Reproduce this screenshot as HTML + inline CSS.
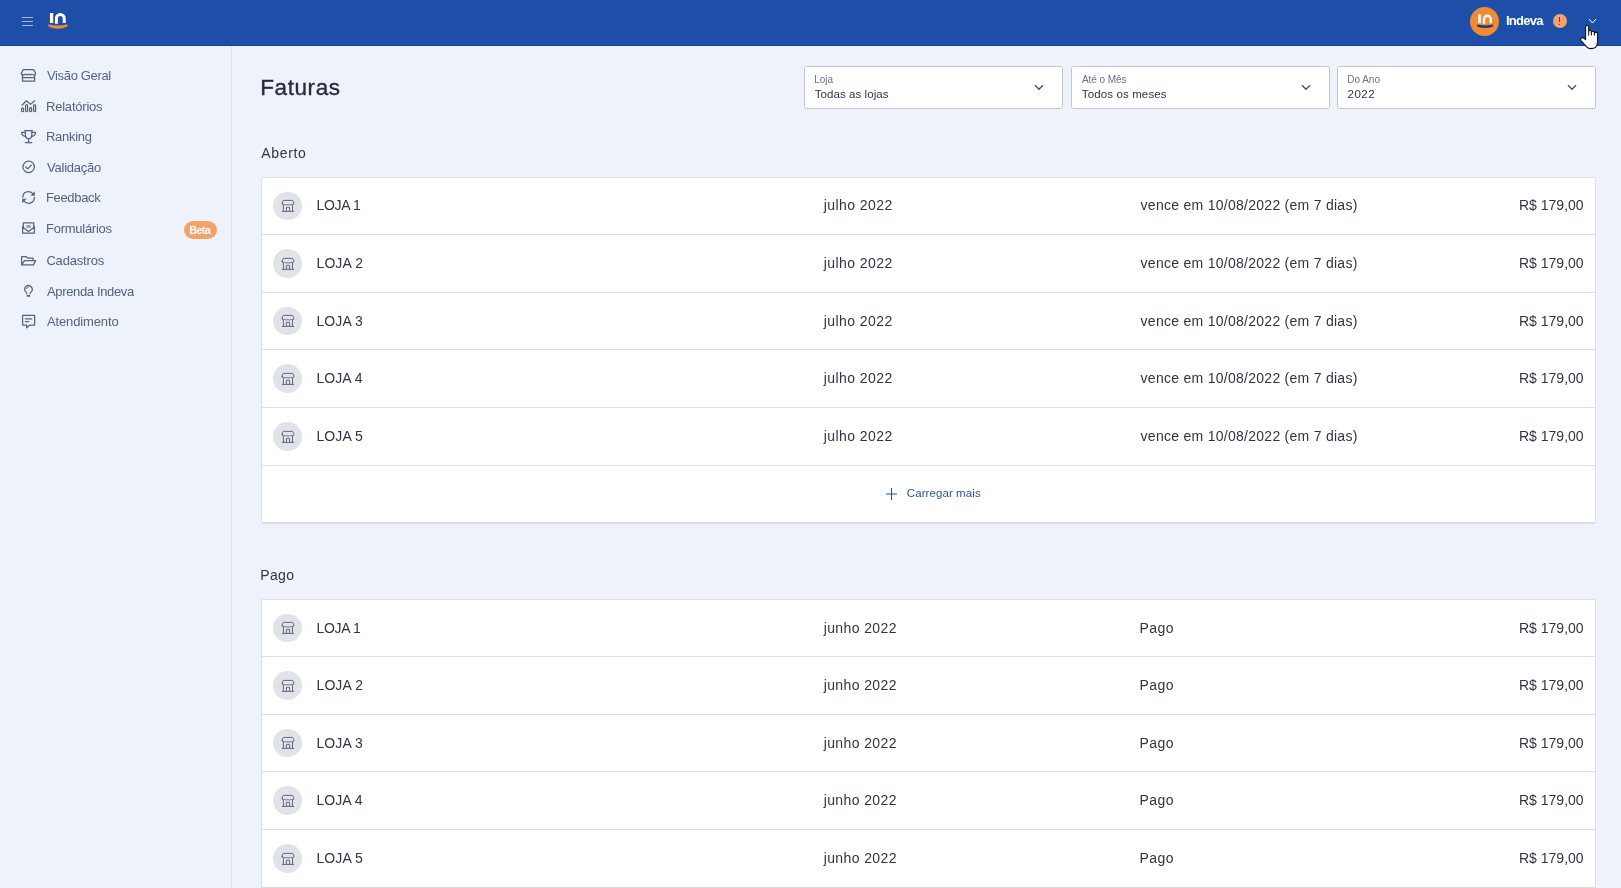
<!DOCTYPE html>
<html><head><meta charset="utf-8"><title>Faturas</title>
<style>
html,body{margin:0;padding:0;}
body{width:1621px;height:888px;overflow:hidden;position:relative;background:#eef2fa;font-family:"Liberation Sans", sans-serif;}
#root{position:absolute;left:0;top:0;width:1621px;height:888px;will-change:transform;overflow:hidden}
.t{position:absolute;line-height:1;white-space:nowrap;}
#hdr{position:absolute;left:0;top:0;width:1621px;height:45px;background:#1d4fa8;box-shadow:0 1px 0 #0f409a;z-index:5}
.hb{position:absolute;left:21.9px;width:11.2px;height:1.3px;background:#acb5c6}
#side{position:absolute;left:231px;top:45px;width:1px;height:843px;background:#dfe3ea}
.dd{position:absolute;top:66px;height:43px;border:1px solid #c4c6cc;border-radius:2.5px;background:#fff;box-sizing:border-box}
.card{position:absolute;left:261px;width:1335px;background:#fff;border:1px solid #dfe0e5;border-bottom:2px solid #dcdde2;box-sizing:border-box;border-radius:2px}
.sep{position:absolute;left:262px;width:1333px;height:1px;background:#dfe0e5}
.av{position:absolute;left:273.2px;width:28.6px;height:28.6px;border-radius:50%;background:#e1e3e8}
</style></head><body><div id="root">

<div id="hdr">
  <div class="hb" style="top:16.6px"></div><div class="hb" style="top:20.6px"></div><div class="hb" style="top:24.6px"></div>
  <svg style="position:absolute;left:44px;top:8px" width="28" height="24" viewBox="0 0 28 24">
    <rect x="5.95" y="5" width="3.25" height="10" fill="#fff"/>
    <path d="M12.4 15.8 V10.4 A3.9 3.9 0 0 1 20.25 10.4 V15" stroke="#fff" stroke-width="3" fill="none"/>
    <path d="M4.3 16.2 Q14 19 23.5 16.2 L23.3 18.6 Q14 23 4.5 18.6 Z" fill="#f5892c"/>
  </svg>
  <div style="position:absolute;left:1470px;top:6.9px;width:29px;height:29px;border-radius:50%;background:#f28a35"></div>
  <svg style="position:absolute;left:1468px;top:5px" width="34" height="34" viewBox="0 0 34 34">
    <rect x="10.2" y="9.2" width="2.6" height="9" fill="#fff"/>
    <path d="M15.95 18.8 V14.2 A3.4 3.4 0 0 1 22.75 14.2 V18.2" stroke="#fff" stroke-width="2.4" fill="none"/>
    <path d="M9 19.6 Q17.2 21.2 25.3 19.6 L25.1 21.4 Q17.2 24.6 9.2 21.4 Z" fill="#1d3c70"/>
  </svg>
<div class="t" style="left:1505.90px;top:14.00px;font-size:13px;color:#fff;font-weight:700;letter-spacing:-0.711px;">Indeva</div>
  <div style="position:absolute;left:1553px;top:14px;width:14px;height:14px;border-radius:50%;background:#f2a26e"></div>
  <div style="position:absolute;left:1559.3px;top:16.8px;width:1.1px;height:5.4px;background:#5a4536"></div>
  <div style="position:absolute;left:1559.3px;top:23.6px;width:1.1px;height:1.3px;background:#5a4536"></div>
  <svg style="position:absolute;left:1588px;top:18px" width="9" height="7" viewBox="0 0 9 7"><path d="M1 1 L4.5 5 L8 1" stroke="#fff" stroke-width="1" fill="none"/></svg>
</div>
<div id="side"></div>

<svg style="position:absolute;left:0;top:45px;overflow:visible" width="231" height="300" viewBox="0 45 231 300">
 <g fill="none" stroke="#55637d" stroke-width="1.25" stroke-linejoin="round" stroke-linecap="round">
  <!-- store -->
  <path d="M23.3 69.6 H33.6 L35.6 73.3 Q35.6 74.9 34.2 74.9 Q32.4 75.1 31.6 74.2 Q30.6 75.3 28.5 74.2 Q26.6 75.3 25.4 74.2 Q24.6 75.1 22.8 74.9 Q21.3 74.9 21.3 73.3 Z"/>
  <path d="M22.5 75 V81.2 H34.6 V75 M22.5 77.5 H34.6"/>
  <!-- chart -->
  <path d="M22 105.2 L26.4 100.8 L30.5 104.4 L34.6 100.8"/>
  <rect x="21.6" y="108" width="2" height="3.5" rx="0.8"/>
  <rect x="25.6" y="104.8" width="2" height="6.7" rx="0.8"/>
  <rect x="29.6" y="107.6" width="2" height="3.9" rx="0.8"/>
  <rect x="33.6" y="104.8" width="2" height="6.7" rx="0.8"/>
  <!-- trophy -->
  <path d="M24.8 130.5 H32.4 M25.4 130.6 V135.5 Q25.6 138.6 28.6 138.8 Q31.6 138.6 31.8 135.5 V130.6"/>
  <path d="M25.2 132.3 H21.6 Q21.8 136 25.6 136.6 M32 132.3 H35.6 Q35.4 136 31.6 136.6"/>
  <path d="M28.6 138.8 V142.4 M25.4 142.5 H31.8"/>
  <!-- check -->
  <circle cx="28.65" cy="166.9" r="5.7"/>
  <path d="M25.8 167 L27.7 168.9 L31.4 165.1"/>
  <!-- refresh -->
  <path d="M22.7 197.2 Q23.2 191.7 28.4 191.6 Q31 191.6 33 193.8"/>
  <path d="M34.5 197.4 Q34 203.2 28.6 203.3 Q26 203.3 24.2 201.2"/>
  <!-- envelope -->
  <path d="M22.6 226.6 V233.2 H34.4 V226.6 M22.8 227.2 L28.5 231.4 L34.2 227.2"/>
  <path d="M23.3 228.5 V222.9 H33.7 V228.5"/>
  <!-- folder -->
  <path d="M33.4 264.9 H21.6 V256.6 H26.2 L27.6 258 H33 V260.3"/>
  <path d="M21.8 264.8 L24.4 260.6 H35.6 L33.4 264.9"/>
  <!-- bulb -->
  <path d="M26.8 293.8 Q26.7 292.8 25.72 291.9 A3.7 3.7 0 1 1 31.18 291.9 Q30.2 292.8 30.1 293.8"/>
  <path d="M26.6 288.6 Q27 287.5 28.2 287.4" stroke-width="0.9"/>
  <!-- chat -->
  <path d="M22.6 315.3 H34.6 V325 H29.8 L26.6 327.8 V325 H22.6 Z"/>
  <path d="M25.4 318.9 H31.6 M25.4 321.5 H28.8"/>
 </g>
 <g fill="#55637d">
  <path d="M34.9 191.2 V195.8 H30.4 Z"/>
  <path d="M22.2 198.8 H26.6 L22.2 203.3 Z"/>
  <rect x="26.3" y="225.1" width="4.6" height="2.8" fill="#9aa3b3"/>
  <rect x="26.6" y="295" width="3.6" height="1.8" rx="0.6"/>
 </g>
</svg>
<div class="t" style="left:47.00px;top:69.00px;font-size:13px;color:#55637f;font-weight:400;letter-spacing:-0.350px;">Visão Geral</div><div class="t" style="left:46.00px;top:100.00px;font-size:13px;color:#55637f;font-weight:400;letter-spacing:-0.214px;">Relatórios</div><div class="t" style="left:46.00px;top:130.00px;font-size:13px;color:#55637f;font-weight:400;letter-spacing:-0.278px;">Ranking</div><div class="t" style="left:47.00px;top:161.00px;font-size:13px;color:#55637f;font-weight:400;letter-spacing:-0.225px;">Validação</div><div class="t" style="left:46.00px;top:191.00px;font-size:13px;color:#55637f;font-weight:400;letter-spacing:-0.342px;">Feedback</div><div class="t" style="left:46.00px;top:222.00px;font-size:13px;color:#55637f;font-weight:400;letter-spacing:-0.262px;">Formulários</div><div class="t" style="left:46.40px;top:254.00px;font-size:13px;color:#55637f;font-weight:400;letter-spacing:-0.181px;">Cadastros</div><div class="t" style="left:47.00px;top:285.00px;font-size:13px;color:#55637f;font-weight:400;letter-spacing:-0.359px;">Aprenda Indeva</div><div class="t" style="left:47.00px;top:315.00px;font-size:13px;color:#55637f;font-weight:400;letter-spacing:-0.136px;">Atendimento</div><div style="position:absolute;left:183.7px;top:220.7px;width:33.5px;height:18.3px;border-radius:9.2px;background:#f3a26b"></div>
<div class="t" style="left:189.30px;top:225.00px;font-size:11px;color:#fff;font-weight:700;letter-spacing:-0.775px;">Beta</div><div class="t" style="left:260.20px;top:77.00px;font-size:22.5px;color:#262c38;font-weight:400;letter-spacing:0.595px;-webkit-text-stroke:0.35px #262c38;">Faturas</div><div class="dd" style="left:804px;width:259px"></div>
<div class="t" style="left:814.20px;top:75.00px;font-size:10px;color:#6b7385;font-weight:400;letter-spacing:-0.015px;">Loja</div><div class="t" style="left:814.80px;top:89.00px;font-size:11.5px;color:#2f3542;font-weight:400;letter-spacing:0.067px;">Todas as lojas</div><svg style="position:absolute;left:1033.5px;top:84px" width="10" height="7" viewBox="0 0 10 7"><path d="M1 1.2 L5 5.2 L9 1.2" stroke="#4a5262" stroke-width="1.4" fill="none"/></svg>
<div class="dd" style="left:1071px;width:259px"></div>
<div class="t" style="left:1082.00px;top:75.00px;font-size:10px;color:#6b7385;font-weight:400;letter-spacing:-0.065px;">Até o Mês</div><div class="t" style="left:1081.80px;top:89.00px;font-size:11.5px;color:#2f3542;font-weight:400;letter-spacing:0.127px;">Todos os meses</div><svg style="position:absolute;left:1300.5px;top:84px" width="10" height="7" viewBox="0 0 10 7"><path d="M1 1.2 L5 5.2 L9 1.2" stroke="#4a5262" stroke-width="1.4" fill="none"/></svg>
<div class="dd" style="left:1337px;width:259px"></div>
<div class="t" style="left:1347.20px;top:75.00px;font-size:10px;color:#6b7385;font-weight:400;letter-spacing:0.001px;">Do Ano</div><div class="t" style="left:1347.50px;top:89.00px;font-size:11.5px;color:#2f3542;font-weight:400;letter-spacing:0.538px;">2022</div><svg style="position:absolute;left:1566.5px;top:84px" width="10" height="7" viewBox="0 0 10 7"><path d="M1 1.2 L5 5.2 L9 1.2" stroke="#4a5262" stroke-width="1.4" fill="none"/></svg>
<div class="t" style="left:261.30px;top:146.00px;font-size:14px;color:#2f3542;font-weight:400;letter-spacing:0.648px;">Aberto</div><div class="card" style="top:177px;height:347px"></div>
<div class="sep" style="top:234px"></div>
<div class="av" style="top:191.70px"></div>
<svg style="position:absolute;left:280.00px;top:198.00px" width="16" height="16" viewBox="0 0 16 16">
<g fill="none" stroke="#596275" stroke-width="0.95" stroke-linejoin="round" stroke-linecap="round">
<path d="M2.1 5.4 Q2.1 6.8 3.4 6.8 Q4.3 6.8 4.9 6.2 Q5.6 7.2 6.4 7.2 Q7.3 7.2 7.9 6.2 Q8.6 7.2 9.5 7.2 Q10.4 7.2 11 6.2 Q11.7 6.8 12.6 6.8 Q13.9 6.8 13.9 5.4 Q13.9 3.8 12.6 2.4 H3.3 Q2.1 3.8 2.1 5.4 Z"/>
<path d="M3.4 7 V13.3 M12.5 7 V13.3 M2.3 13.4 H13.7 M6.4 13.3 V9.9 Q6.4 9.3 7 9.3 H9 Q9.6 9.3 9.6 9.9 V13.3"/>
</g></svg>
<div class="t" style="left:316.50px;top:198.00px;font-size:14px;color:#2f3542;font-weight:400;letter-spacing:-0.321px;">LOJA 1</div><div class="t" style="left:823.70px;top:198.00px;font-size:14px;color:#2f3542;font-weight:400;letter-spacing:0.430px;">julho 2022</div><div class="t" style="left:1140.60px;top:198.00px;font-size:14px;color:#2f3542;font-weight:400;letter-spacing:0.273px;">vence em 10/08/2022 (em 7 dias)</div><div class="t" style="left:1519.00px;top:198.00px;font-size:14px;color:#2f3542;font-weight:400;letter-spacing:-0.003px;">R$ 179,00</div><div class="sep" style="top:292px"></div>
<div class="av" style="top:249.20px"></div>
<svg style="position:absolute;left:280.00px;top:255.50px" width="16" height="16" viewBox="0 0 16 16">
<g fill="none" stroke="#596275" stroke-width="0.95" stroke-linejoin="round" stroke-linecap="round">
<path d="M2.1 5.4 Q2.1 6.8 3.4 6.8 Q4.3 6.8 4.9 6.2 Q5.6 7.2 6.4 7.2 Q7.3 7.2 7.9 6.2 Q8.6 7.2 9.5 7.2 Q10.4 7.2 11 6.2 Q11.7 6.8 12.6 6.8 Q13.9 6.8 13.9 5.4 Q13.9 3.8 12.6 2.4 H3.3 Q2.1 3.8 2.1 5.4 Z"/>
<path d="M3.4 7 V13.3 M12.5 7 V13.3 M2.3 13.4 H13.7 M6.4 13.3 V9.9 Q6.4 9.3 7 9.3 H9 Q9.6 9.3 9.6 9.9 V13.3"/>
</g></svg>
<div class="t" style="left:316.50px;top:256.00px;font-size:14px;color:#2f3542;font-weight:400;letter-spacing:0.099px;">LOJA 2</div><div class="t" style="left:823.70px;top:256.00px;font-size:14px;color:#2f3542;font-weight:400;letter-spacing:0.430px;">julho 2022</div><div class="t" style="left:1140.60px;top:256.00px;font-size:14px;color:#2f3542;font-weight:400;letter-spacing:0.273px;">vence em 10/08/2022 (em 7 dias)</div><div class="t" style="left:1519.00px;top:256.00px;font-size:14px;color:#2f3542;font-weight:400;letter-spacing:-0.003px;">R$ 179,00</div><div class="sep" style="top:349px"></div>
<div class="av" style="top:306.70px"></div>
<svg style="position:absolute;left:280.00px;top:313.00px" width="16" height="16" viewBox="0 0 16 16">
<g fill="none" stroke="#596275" stroke-width="0.95" stroke-linejoin="round" stroke-linecap="round">
<path d="M2.1 5.4 Q2.1 6.8 3.4 6.8 Q4.3 6.8 4.9 6.2 Q5.6 7.2 6.4 7.2 Q7.3 7.2 7.9 6.2 Q8.6 7.2 9.5 7.2 Q10.4 7.2 11 6.2 Q11.7 6.8 12.6 6.8 Q13.9 6.8 13.9 5.4 Q13.9 3.8 12.6 2.4 H3.3 Q2.1 3.8 2.1 5.4 Z"/>
<path d="M3.4 7 V13.3 M12.5 7 V13.3 M2.3 13.4 H13.7 M6.4 13.3 V9.9 Q6.4 9.3 7 9.3 H9 Q9.6 9.3 9.6 9.9 V13.3"/>
</g></svg>
<div class="t" style="left:316.50px;top:314.00px;font-size:14px;color:#2f3542;font-weight:400;letter-spacing:0.079px;">LOJA 3</div><div class="t" style="left:823.70px;top:314.00px;font-size:14px;color:#2f3542;font-weight:400;letter-spacing:0.430px;">julho 2022</div><div class="t" style="left:1140.60px;top:314.00px;font-size:14px;color:#2f3542;font-weight:400;letter-spacing:0.273px;">vence em 10/08/2022 (em 7 dias)</div><div class="t" style="left:1519.00px;top:314.00px;font-size:14px;color:#2f3542;font-weight:400;letter-spacing:-0.003px;">R$ 179,00</div><div class="sep" style="top:407px"></div>
<div class="av" style="top:364.20px"></div>
<svg style="position:absolute;left:280.00px;top:370.50px" width="16" height="16" viewBox="0 0 16 16">
<g fill="none" stroke="#596275" stroke-width="0.95" stroke-linejoin="round" stroke-linecap="round">
<path d="M2.1 5.4 Q2.1 6.8 3.4 6.8 Q4.3 6.8 4.9 6.2 Q5.6 7.2 6.4 7.2 Q7.3 7.2 7.9 6.2 Q8.6 7.2 9.5 7.2 Q10.4 7.2 11 6.2 Q11.7 6.8 12.6 6.8 Q13.9 6.8 13.9 5.4 Q13.9 3.8 12.6 2.4 H3.3 Q2.1 3.8 2.1 5.4 Z"/>
<path d="M3.4 7 V13.3 M12.5 7 V13.3 M2.3 13.4 H13.7 M6.4 13.3 V9.9 Q6.4 9.3 7 9.3 H9 Q9.6 9.3 9.6 9.9 V13.3"/>
</g></svg>
<div class="t" style="left:316.50px;top:371.00px;font-size:14px;color:#2f3542;font-weight:400;letter-spacing:0.039px;">LOJA 4</div><div class="t" style="left:823.70px;top:371.00px;font-size:14px;color:#2f3542;font-weight:400;letter-spacing:0.430px;">julho 2022</div><div class="t" style="left:1140.60px;top:371.00px;font-size:14px;color:#2f3542;font-weight:400;letter-spacing:0.273px;">vence em 10/08/2022 (em 7 dias)</div><div class="t" style="left:1519.00px;top:371.00px;font-size:14px;color:#2f3542;font-weight:400;letter-spacing:-0.003px;">R$ 179,00</div><div class="sep" style="top:465px"></div>
<div class="av" style="top:422.20px"></div>
<svg style="position:absolute;left:280.00px;top:428.50px" width="16" height="16" viewBox="0 0 16 16">
<g fill="none" stroke="#596275" stroke-width="0.95" stroke-linejoin="round" stroke-linecap="round">
<path d="M2.1 5.4 Q2.1 6.8 3.4 6.8 Q4.3 6.8 4.9 6.2 Q5.6 7.2 6.4 7.2 Q7.3 7.2 7.9 6.2 Q8.6 7.2 9.5 7.2 Q10.4 7.2 11 6.2 Q11.7 6.8 12.6 6.8 Q13.9 6.8 13.9 5.4 Q13.9 3.8 12.6 2.4 H3.3 Q2.1 3.8 2.1 5.4 Z"/>
<path d="M3.4 7 V13.3 M12.5 7 V13.3 M2.3 13.4 H13.7 M6.4 13.3 V9.9 Q6.4 9.3 7 9.3 H9 Q9.6 9.3 9.6 9.9 V13.3"/>
</g></svg>
<div class="t" style="left:316.50px;top:429.00px;font-size:14px;color:#2f3542;font-weight:400;letter-spacing:0.079px;">LOJA 5</div><div class="t" style="left:823.70px;top:429.00px;font-size:14px;color:#2f3542;font-weight:400;letter-spacing:0.430px;">julho 2022</div><div class="t" style="left:1140.60px;top:429.00px;font-size:14px;color:#2f3542;font-weight:400;letter-spacing:0.273px;">vence em 10/08/2022 (em 7 dias)</div><div class="t" style="left:1519.00px;top:429.00px;font-size:14px;color:#2f3542;font-weight:400;letter-spacing:-0.003px;">R$ 179,00</div><svg style="position:absolute;left:886px;top:488px" width="11" height="12" viewBox="0 0 11 12"><path d="M5.5 0 V12 M0 6 H11" stroke="#2150a6" stroke-width="1.05" fill="none"/></svg>
<div class="t" style="left:906.80px;top:488.00px;font-size:11.5px;color:#2b55a3;font-weight:400;letter-spacing:0.083px;">Carregar mais</div><div class="t" style="left:260.20px;top:568.00px;font-size:14px;color:#2f3542;font-weight:400;letter-spacing:0.397px;">Pago</div><div class="card" style="top:599px;height:290px"></div>
<div class="sep" style="top:656px"></div>
<div class="av" style="top:613.70px"></div>
<svg style="position:absolute;left:280.00px;top:620.00px" width="16" height="16" viewBox="0 0 16 16">
<g fill="none" stroke="#596275" stroke-width="0.95" stroke-linejoin="round" stroke-linecap="round">
<path d="M2.1 5.4 Q2.1 6.8 3.4 6.8 Q4.3 6.8 4.9 6.2 Q5.6 7.2 6.4 7.2 Q7.3 7.2 7.9 6.2 Q8.6 7.2 9.5 7.2 Q10.4 7.2 11 6.2 Q11.7 6.8 12.6 6.8 Q13.9 6.8 13.9 5.4 Q13.9 3.8 12.6 2.4 H3.3 Q2.1 3.8 2.1 5.4 Z"/>
<path d="M3.4 7 V13.3 M12.5 7 V13.3 M2.3 13.4 H13.7 M6.4 13.3 V9.9 Q6.4 9.3 7 9.3 H9 Q9.6 9.3 9.6 9.9 V13.3"/>
</g></svg>
<div class="t" style="left:316.50px;top:621.00px;font-size:14px;color:#2f3542;font-weight:400;letter-spacing:-0.321px;">LOJA 1</div><div class="t" style="left:823.70px;top:621.00px;font-size:14px;color:#2f3542;font-weight:400;letter-spacing:0.389px;">junho 2022</div><div class="t" style="left:1139.50px;top:621.00px;font-size:14px;color:#2f3542;font-weight:400;letter-spacing:0.463px;">Pago</div><div class="t" style="left:1519.00px;top:621.00px;font-size:14px;color:#2f3542;font-weight:400;letter-spacing:-0.003px;">R$ 179,00</div><div class="sep" style="top:714px"></div>
<div class="av" style="top:671.20px"></div>
<svg style="position:absolute;left:280.00px;top:677.50px" width="16" height="16" viewBox="0 0 16 16">
<g fill="none" stroke="#596275" stroke-width="0.95" stroke-linejoin="round" stroke-linecap="round">
<path d="M2.1 5.4 Q2.1 6.8 3.4 6.8 Q4.3 6.8 4.9 6.2 Q5.6 7.2 6.4 7.2 Q7.3 7.2 7.9 6.2 Q8.6 7.2 9.5 7.2 Q10.4 7.2 11 6.2 Q11.7 6.8 12.6 6.8 Q13.9 6.8 13.9 5.4 Q13.9 3.8 12.6 2.4 H3.3 Q2.1 3.8 2.1 5.4 Z"/>
<path d="M3.4 7 V13.3 M12.5 7 V13.3 M2.3 13.4 H13.7 M6.4 13.3 V9.9 Q6.4 9.3 7 9.3 H9 Q9.6 9.3 9.6 9.9 V13.3"/>
</g></svg>
<div class="t" style="left:316.50px;top:678.00px;font-size:14px;color:#2f3542;font-weight:400;letter-spacing:0.099px;">LOJA 2</div><div class="t" style="left:823.70px;top:678.00px;font-size:14px;color:#2f3542;font-weight:400;letter-spacing:0.389px;">junho 2022</div><div class="t" style="left:1139.50px;top:678.00px;font-size:14px;color:#2f3542;font-weight:400;letter-spacing:0.463px;">Pago</div><div class="t" style="left:1519.00px;top:678.00px;font-size:14px;color:#2f3542;font-weight:400;letter-spacing:-0.003px;">R$ 179,00</div><div class="sep" style="top:771px"></div>
<div class="av" style="top:728.70px"></div>
<svg style="position:absolute;left:280.00px;top:735.00px" width="16" height="16" viewBox="0 0 16 16">
<g fill="none" stroke="#596275" stroke-width="0.95" stroke-linejoin="round" stroke-linecap="round">
<path d="M2.1 5.4 Q2.1 6.8 3.4 6.8 Q4.3 6.8 4.9 6.2 Q5.6 7.2 6.4 7.2 Q7.3 7.2 7.9 6.2 Q8.6 7.2 9.5 7.2 Q10.4 7.2 11 6.2 Q11.7 6.8 12.6 6.8 Q13.9 6.8 13.9 5.4 Q13.9 3.8 12.6 2.4 H3.3 Q2.1 3.8 2.1 5.4 Z"/>
<path d="M3.4 7 V13.3 M12.5 7 V13.3 M2.3 13.4 H13.7 M6.4 13.3 V9.9 Q6.4 9.3 7 9.3 H9 Q9.6 9.3 9.6 9.9 V13.3"/>
</g></svg>
<div class="t" style="left:316.50px;top:736.00px;font-size:14px;color:#2f3542;font-weight:400;letter-spacing:0.079px;">LOJA 3</div><div class="t" style="left:823.70px;top:736.00px;font-size:14px;color:#2f3542;font-weight:400;letter-spacing:0.389px;">junho 2022</div><div class="t" style="left:1139.50px;top:736.00px;font-size:14px;color:#2f3542;font-weight:400;letter-spacing:0.463px;">Pago</div><div class="t" style="left:1519.00px;top:736.00px;font-size:14px;color:#2f3542;font-weight:400;letter-spacing:-0.003px;">R$ 179,00</div><div class="sep" style="top:829px"></div>
<div class="av" style="top:786.20px"></div>
<svg style="position:absolute;left:280.00px;top:792.50px" width="16" height="16" viewBox="0 0 16 16">
<g fill="none" stroke="#596275" stroke-width="0.95" stroke-linejoin="round" stroke-linecap="round">
<path d="M2.1 5.4 Q2.1 6.8 3.4 6.8 Q4.3 6.8 4.9 6.2 Q5.6 7.2 6.4 7.2 Q7.3 7.2 7.9 6.2 Q8.6 7.2 9.5 7.2 Q10.4 7.2 11 6.2 Q11.7 6.8 12.6 6.8 Q13.9 6.8 13.9 5.4 Q13.9 3.8 12.6 2.4 H3.3 Q2.1 3.8 2.1 5.4 Z"/>
<path d="M3.4 7 V13.3 M12.5 7 V13.3 M2.3 13.4 H13.7 M6.4 13.3 V9.9 Q6.4 9.3 7 9.3 H9 Q9.6 9.3 9.6 9.9 V13.3"/>
</g></svg>
<div class="t" style="left:316.50px;top:793.00px;font-size:14px;color:#2f3542;font-weight:400;letter-spacing:0.039px;">LOJA 4</div><div class="t" style="left:823.70px;top:793.00px;font-size:14px;color:#2f3542;font-weight:400;letter-spacing:0.389px;">junho 2022</div><div class="t" style="left:1139.50px;top:793.00px;font-size:14px;color:#2f3542;font-weight:400;letter-spacing:0.463px;">Pago</div><div class="t" style="left:1519.00px;top:793.00px;font-size:14px;color:#2f3542;font-weight:400;letter-spacing:-0.003px;">R$ 179,00</div><div class="av" style="top:844.20px"></div>
<svg style="position:absolute;left:280.00px;top:850.50px" width="16" height="16" viewBox="0 0 16 16">
<g fill="none" stroke="#596275" stroke-width="0.95" stroke-linejoin="round" stroke-linecap="round">
<path d="M2.1 5.4 Q2.1 6.8 3.4 6.8 Q4.3 6.8 4.9 6.2 Q5.6 7.2 6.4 7.2 Q7.3 7.2 7.9 6.2 Q8.6 7.2 9.5 7.2 Q10.4 7.2 11 6.2 Q11.7 6.8 12.6 6.8 Q13.9 6.8 13.9 5.4 Q13.9 3.8 12.6 2.4 H3.3 Q2.1 3.8 2.1 5.4 Z"/>
<path d="M3.4 7 V13.3 M12.5 7 V13.3 M2.3 13.4 H13.7 M6.4 13.3 V9.9 Q6.4 9.3 7 9.3 H9 Q9.6 9.3 9.6 9.9 V13.3"/>
</g></svg>
<div class="t" style="left:316.50px;top:851.00px;font-size:14px;color:#2f3542;font-weight:400;letter-spacing:0.079px;">LOJA 5</div><div class="t" style="left:823.70px;top:851.00px;font-size:14px;color:#2f3542;font-weight:400;letter-spacing:0.389px;">junho 2022</div><div class="t" style="left:1139.50px;top:851.00px;font-size:14px;color:#2f3542;font-weight:400;letter-spacing:0.463px;">Pago</div><div class="t" style="left:1519.00px;top:851.00px;font-size:14px;color:#2f3542;font-weight:400;letter-spacing:-0.003px;">R$ 179,00</div>
<svg style="position:absolute;left:1576px;top:22px;z-index:10" width="26" height="30" viewBox="0 0 26 30">
 <path d="M9.6 17.6 V4.9 A1.55 1.55 0 0 1 12.7 4.9 V9.6 A1.35 1.35 0 0 1 15.4 9.6 V10.7 A1.5 1.5 0 0 1 18.4 10.7 V11.7 A1.55 1.55 0 0 1 21.5 11.7 V20.5 Q21.5 23.5 19.6 25.3 Q18.2 26.6 14.5 26.6 Q12.3 26.6 11 25.2 L5 18.6 Q4 17.3 5 16.2 Q6.2 15.2 7.6 16 Z" fill="#fff" stroke="#111" stroke-width="1.1" stroke-linejoin="round"/>
 <path d="M12.7 9.6 V13.6 M15.4 10.4 V13.6 M18.4 11.4 V13.6" stroke="#111" stroke-width="1" fill="none"/>
</svg>

</div></body></html>
